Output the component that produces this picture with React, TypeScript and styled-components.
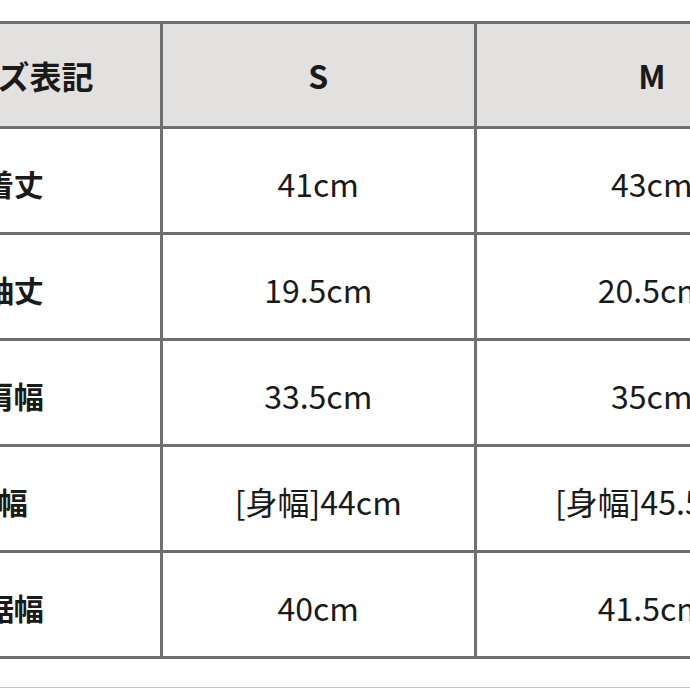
import styled, { createGlobalStyle } from "styled-components";

const GlobalStyle = createGlobalStyle`
  html, body {
    margin: 0;
    padding: 0;
    background: #ffffff;
  }
  body {
    font-family: "Noto Sans CJK JP", "Noto Sans", sans-serif;
    color: #1a1a1a;
  }
`;

const Page = styled.div`
  width: 690px;
  height: 690px;
  overflow: hidden;
  padding-top: 21px;
  box-sizing: border-box;
  background: #ffffff;
`;

const SizeTable = styled.table`
  margin-left: -135px;
  border-collapse: separate;
  border-spacing: 0;
  table-layout: fixed;
  width: 965px;
  border-top: 3px solid #6f6f6f;
  border-left: 3px solid #6f6f6f;
`;

const HeadCell = styled.th<{ $w: number }>`
  width: ${(p) => p.$w}px;
  height: 105px;
  box-sizing: border-box;
  padding: 0;
  background: #e3e0e0;
  border-right: 3px solid #6f6f6f;
  border-bottom: 3px solid #6f6f6f;
  font-size: 32px;
  font-weight: 700;
  line-height: 1;
  text-align: center;
  vertical-align: middle;
`;

const Cell = styled.td<{ $label?: boolean; $pushLeft?: number }>`
  height: 106px;
  padding: 5px ${(p) => p.$pushLeft ?? 0}px 0 0;
  box-sizing: border-box;
  border-right: 3px solid #6f6f6f;
  border-bottom: 3px solid #6f6f6f;
  font-size: ${(p) => (p.$label ? "30px" : "32px")};
  font-weight: ${(p) => (p.$label ? 700 : 400)};
  line-height: 1;
  text-align: center;
  vertical-align: middle;
  white-space: nowrap;
`;

const Footer = styled.div`
  margin-top: 28px;
  border-top: 1px solid #c4c4c4;
`;

const sizes = ["S", "M"];

const rows = [
  { label: "着丈", values: ["41cm", "43cm"] },
  { label: "袖丈", values: ["19.5cm", "20.5cm"] },
  { label: "肩幅", values: ["33.5cm", "35cm"] },
  { label: "身幅", values: ["[身幅]44cm", "[身幅]45.5cm"], pushLeft: 32 },
  { label: "裾幅", values: ["40cm", "41.5cm"] },
];

const App = () => {
  return (
    <>
      <GlobalStyle />
      <Page>
        <SizeTable>
          <thead>
            <tr>
              <HeadCell $w={292}>サイズ表記</HeadCell>
              <HeadCell $w={311}>{sizes[0]}</HeadCell>
              <HeadCell $w={350}>{sizes[1]}</HeadCell>
            </tr>
          </thead>
          <tbody>
            {rows.map((row) => (
              <tr key={row.label}>
                <Cell $label $pushLeft={row.pushLeft}>
                  {row.label}
                </Cell>
                {row.values.map((v, i) => (
                  <Cell key={i}>{v}</Cell>
                ))}
              </tr>
            ))}
          </tbody>
        </SizeTable>
        <Footer />
      </Page>
    </>
  );
};

export default App;
